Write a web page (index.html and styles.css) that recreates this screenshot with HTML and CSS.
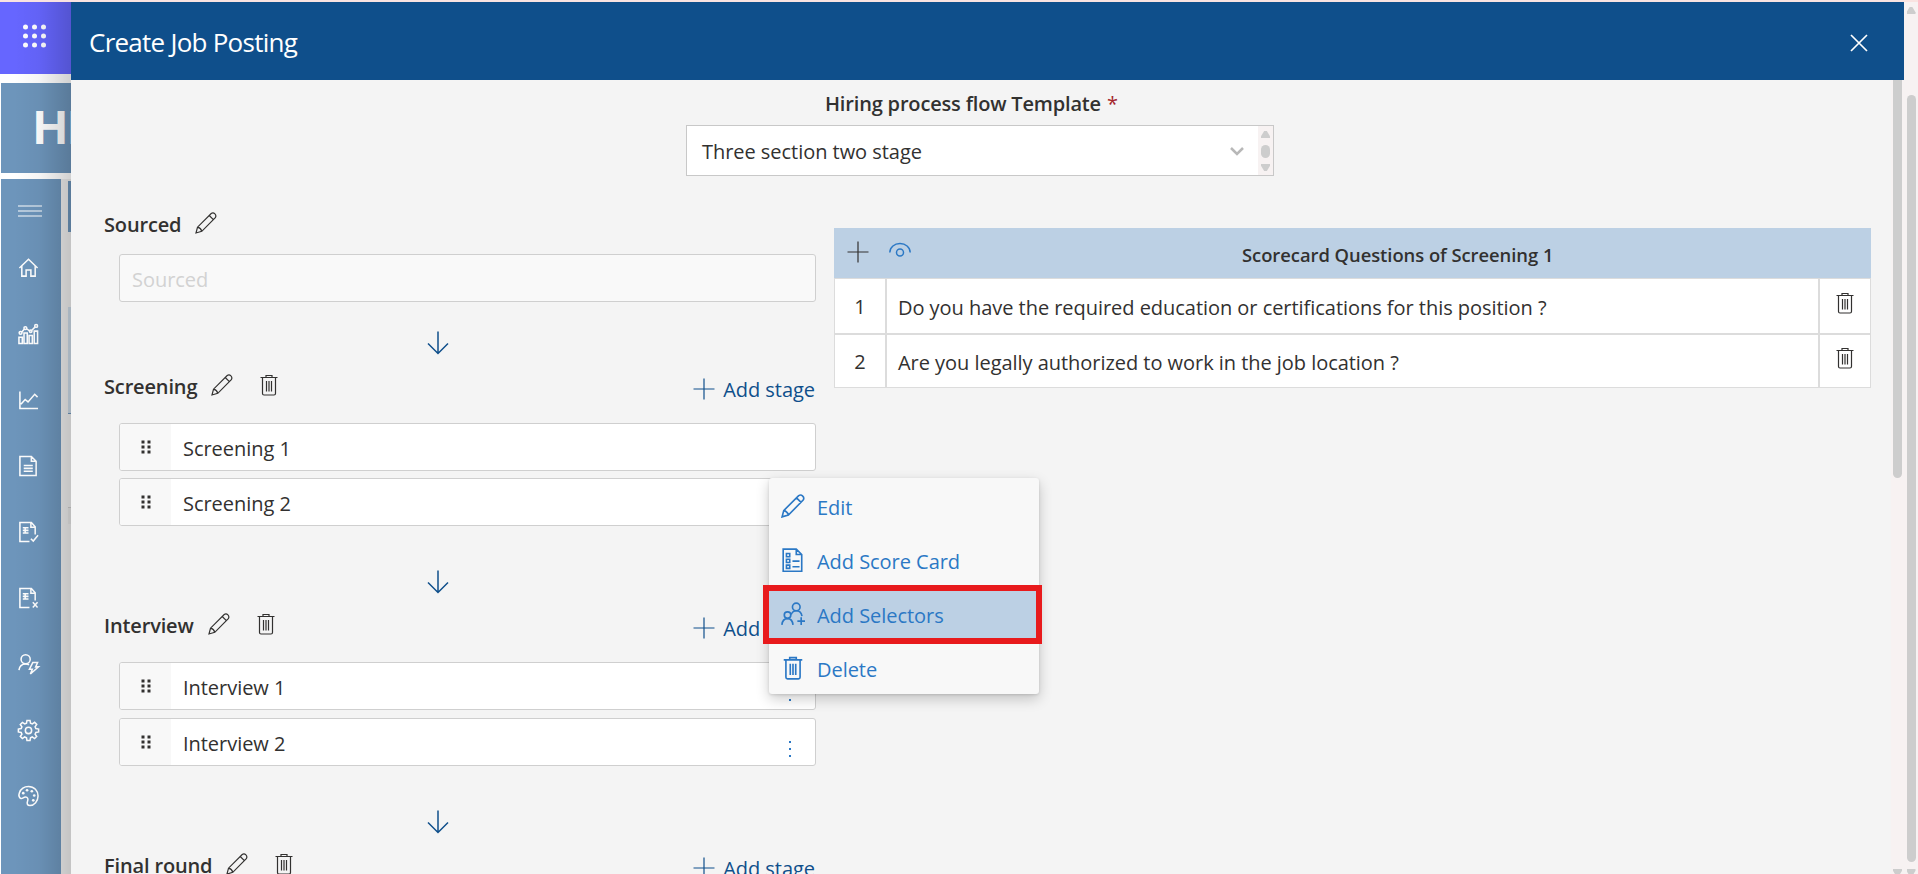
FILE: index.html
```html
<!DOCTYPE html>
<html lang="en">
<head>
<meta charset="utf-8">
<title>Create Job Posting</title>
<link rel="stylesheet" href="styles.css">
</head>
<body>
<svg class="defs" aria-hidden="true">
  <symbol id="pencil" viewBox="0 0 22 22"><path d="M1 21l1.500-5.800L16.200 1.500q2-1.300 3.700.400t.4 3.700L6.800 19.300zM2.500 15.200q3.300.600 4.300 4.100M14.200 3.500l4.200 4.200"/></symbol>
  <symbol id="trash" viewBox="0 0 22 22"><path d="M2.500 3.500h17M8 3.500V1.500h6v2M4.500 3.500V19.500q0 1.500 1.500 1.500h10q1.500 0 1.500-1.500V3.500M8.500 7v10.500M11 7v10.500M13.500 7v10.500"/></symbol>
  <symbol id="plus" viewBox="0 0 22 22"><path d="M.5 11h21M11 .5v21"/></symbol>
  <symbol id="down" viewBox="0 0 22 24"><path d="M11 .5v22M1 12.500l10 10 10-10"/></symbol>
  <symbol id="grip" viewBox="0 0 10 14"><path class="solid" d="M.5.500h3v3h-3zM6.500.500h3v3h-3zM.5 5.500h3v3h-3zM6.500 5.500h3v3h-3zM.5 10.500h3v3h-3zM6.500 10.500h3v3h-3z"/></symbol>
  <symbol id="more" viewBox="0 0 4 18"><path class="solid" d="M1 1h2v2H1zM1 8h2v2H1zM1 15h2v2H1z"/></symbol>
</svg>

<div class="app">
  <div class="suite">
    <svg class="waffle" viewBox="0 0 24 24"><circle cx="3" cy="3" r="2.500"/><circle cx="12" cy="3" r="2.500"/><circle cx="21" cy="3" r="2.500"/><circle cx="3" cy="12" r="2.500"/><circle cx="12" cy="12" r="2.500"/><circle cx="21" cy="12" r="2.500"/><circle cx="3" cy="21" r="2.500"/><circle cx="12" cy="21" r="2.500"/><circle cx="21" cy="21" r="2.500"/></svg>
  </div>
  <div class="brand">HR</div>
  <div class="below">
    <nav class="rail">
      <svg class="burger" viewBox="0 0 24 12"><path d="M0 1h24M0 6h24M0 11h24"/></svg>
      <svg viewBox="0 0 22 22"><path d="M1.500 11L11 1.800 20.500 11M4 9v10.500h4.500v-6.500h5v6.500H18V9"/></svg>
      <svg viewBox="0 0 22 22"><path d="M1 14.500h3.500V21H1zM6.300 10h3.400v11H6.300zM11.600 12.500H15V21h-3.400zM17 8h3.500v13H17zM4 9l2.500-3M9 5.500l3.500 2.500M14.500 7l3.500-3.500"/><circle cx="2.700" cy="9.800" r="1.500"/><circle cx="7.700" cy="4.800" r="1.500"/><circle cx="13.300" cy="8" r="1.300"/><circle cx="19" cy="2.500" r="1.500"/></svg>
      <svg viewBox="0 0 22 22"><path d="M2 2v18h19M3 15.500l4.500-5 3 2.500 7-8 3 3"/></svg>
      <svg viewBox="0 0 22 22"><path d="M2 1h12l5 5v15H2zM14 1v5h5M6 10.500h9.500M6 13.500h9.500M6 16.500h9.500"/></svg>
      <svg viewBox="0 0 22 22"><path d="M12 21H2V1h12l4 4.500v8M13.500 1v5H18M5 6.500h6M5 9.300h6M5 12h6M7.500 6v6.500M13.500 18l2.500 2.500 5-6"/></svg>
      <svg viewBox="0 0 22 22"><path d="M12 21H2V1h12l4 4.500v8M13.500 1v5H18M5 6.500h6M5 9.300h6M5 12h6M7.500 6v6.500M15.500 15.500l5 5.500M20.500 15.500l-5 5.500"/></svg>
      <svg viewBox="0 0 22 22"><circle cx="8" cy="6" r="4.800"/><path d="M1 17.500c.5-4 3-6.500 7-6.500 1.500 0 2.500.3 3.500 1M15.500 9.500h5l-2 4.500h3l-8.500 7.500 2-5h-3z"/></svg>
      <svg viewBox="0 0 22 22"><path d="M9.400 1h3.200l.5 2.900 1.900.8 2.400-1.700 2.200 2.200-1.700 2.500.8 1.800 2.900.5v3l-2.900.5-.8 1.900 1.700 2.400-2.200 2.200-2.500-1.700-1.800.8-.5 2.900h-3.200l-.5-2.900-1.900-.8-2.400 1.700-2.200-2.200 1.700-2.400-.8-1.900-2.900-.5v-3l2.900-.5.800-1.900-1.700-2.400 2.200-2.200 2.500 1.700 1.800-.8z"/><circle cx="11" cy="11.500" r="3.300"/></svg>
      <svg viewBox="0 0 22 22"><path d="M11 1c6 0 10 4.500 10 10s-4 10-8.500 10c-3 0-3.300-2.500-2.500-4.500 1-2.500 0-4.500-2-4.500-2.500 0-3 2-5 1.500C1 13 .5 10 1.500 7.500 3 3.500 7 1 11 1z"/><g class="dots"><circle cx="5.500" cy="8" r="1.400"/><circle cx="9.500" cy="5" r="1.400"/><circle cx="14.500" cy="6" r="1.400"/><circle cx="17" cy="10.500" r="1.400"/><circle cx="16" cy="15.500" r="1.400"/></g></svg>
    </nav>
    <div class="sliver"><i class="s1"></i><i class="s2"></i><i class="s3"></i></div>
  </div>
</div>

<section class="panel">
  <header class="bar"><h1>Create Job Posting</h1><svg class="close" viewBox="0 0 18 18"><path d="M1 1l16 16M17 1L1 17"/></svg></header>
  <div class="scroller">
    <main class="content">
      <div class="template">
        <label class="t-label"><span>Hiring process flow Template</span> <b>*</b></label>
        <div class="select"><span class="t-value">Three section two stage</span><svg class="chev" viewBox="0 0 16 12"><path d="M2 3l6 6 6-6"/></svg>
          <div class="mini"><i class="up"></i><i class="thumb"></i><i class="dn"></i></div></div>
      </div>
      <div class="cols">
        <div class="flow">
          <div class="head first"><h2>Sourced</h2><svg class="ic"><use href="#pencil"/></svg></div>
          <div class="box disabled">Sourced</div>
          <svg class="arrow"><use href="#down"/></svg>

          <div class="head"><h2>Screening</h2><svg class="ic"><use href="#pencil"/></svg><svg class="ic del"><use href="#trash"/></svg><a class="add"><svg class="ic"><use href="#plus"/></svg><span>Add stage</span></a></div>
          <div class="stages">
            <div class="box"><span class="handle"><svg><use href="#grip"/></svg></span><span class="stage">Screening 1</span></div>
            <div class="box"><span class="handle"><svg><use href="#grip"/></svg></span><span class="stage">Screening 2</span></div>
          </div>
          <svg class="arrow"><use href="#down"/></svg>

          <div class="head"><h2>Interview</h2><svg class="ic"><use href="#pencil"/></svg><svg class="ic del"><use href="#trash"/></svg><a class="add"><svg class="ic"><use href="#plus"/></svg><span>Add stage</span></a></div>
          <div class="stages wide">
            <div class="box"><span class="handle"><svg><use href="#grip"/></svg></span><span class="stage">Interview 1</span><svg class="dots3"><use href="#more"/></svg></div>
            <div class="box"><span class="handle"><svg><use href="#grip"/></svg></span><span class="stage">Interview 2</span><svg class="dots3"><use href="#more"/></svg></div>
          </div>
          <svg class="arrow"><use href="#down"/></svg>

          <div class="head"><h2>Final round</h2><svg class="ic"><use href="#pencil"/></svg><svg class="ic del"><use href="#trash"/></svg><a class="add"><svg class="ic"><use href="#plus"/></svg><span>Add stage</span></a></div>
        </div>

        <div class="score">
          <div class="s-head"><svg class="ic"><use href="#plus"/></svg><svg class="ic eye" viewBox="0 0 22 22"><path d="M.8 11.500C1 6 5.500 2.600 11 2.600S21 6 21.200 11.500"/><circle cx="11" cy="11.500" r="3.500"/></svg><span>Scorecard Questions of Screening 1</span></div>
          <div class="s-row"><span class="num">1</span><span class="q">Do you have the required education or certifications for this position ?</span><span class="act"><svg class="ic"><use href="#trash"/></svg></span></div>
          <div class="s-row"><span class="num">2</span><span class="q">Are you legally authorized to work in the job location ?</span><span class="act"><svg class="ic"><use href="#trash"/></svg></span></div>
        </div>
      </div>
    </main>
    <div class="track inner"><i class="thumb"></i><i class="dn"></i></div>
  </div>
</section>
<div class="track outer"><i class="up"></i><i class="thumb"></i><i class="dn"></i></div>

<div class="menu">
  <a class="m-item"><svg class="mi"><use href="#pencil"/></svg><span>Edit</span></a>
  <a class="m-item"><svg class="mi" viewBox="0 0 22 22"><path d="M2 1h12l5 5v15.300H2zM14 1v5h5M5 5h3v3H5zM5 10.300h3v3H5zM5 15.700h3v3H5zM10.500 12h6.500M10.500 17.200h6.500"/></svg><span>Add Score Card</span></a>
  <a class="m-item on"><svg class="mi" viewBox="0 0 22 22"><circle cx="14" cy="4.500" r="3.500"/><circle cx="6" cy="12" r="3"/><path d="M.8 21c.3-3.500 2.200-5.800 5.200-5.800s4.700 2.300 5 5.800M9.300 11.500c1-2.300 2.700-3.500 4.700-3.500 3 0 4.800 2 5.200 5M18.500 14v7M15 17.500h7"/></svg><span>Add Selectors</span></a>
  <a class="m-item"><svg class="mi"><use href="#trash"/></svg><span>Delete</span></a>
</div>
<div class="marker"></div>
</body>
</html>
```

FILE: styles.css
```css
* { box-sizing: border-box; }
body { margin: 0; width: 1918px; height: 874px; overflow: hidden; position: relative; background: #fff; color: #323130; font: 20px/27px "Open Sans", "Noto Sans", sans-serif; letter-spacing: -.04px; border-top: 2px solid #f9e3e1; }
.defs { position: absolute; width: 0; height: 0; }
svg { fill: none; stroke: currentColor; stroke-width: 1.2; flex: none; overflow: visible; }
.solid { fill: currentColor; stroke: none; }
h1, h2 { margin: 0; font-weight: 400; }

/* page behind the panel */
.app { width: 71px; height: 872px; display: flex; flex-direction: column; overflow: hidden; position: relative; }
.app::after { content: ""; position: absolute; inset: 0; background: linear-gradient(90deg, rgba(0,0,0,0) 20%, rgba(0,0,0,.04) 55%, rgba(0,0,0,.18)); }
.suite { height: 72px; background: #6666ff; padding: 22px 0 0 22px; }
.waffle { width: 25px; height: 24px; fill: #fff; stroke: none; display: block; }
.brand { margin: 9px 0 6px 1px; height: 90px; background: #6d95bb; color: #fff; font: bold 48px/90px "Liberation Sans", sans-serif; padding-left: 32px; white-space: nowrap; }
.below { flex: 1; display: flex; margin-left: 1px; background: #eee; }
.rail { width: 60px; background: #6d95bb; color: #fff; display: flex; flex-direction: column; padding: 26px 0 0 17px; }
.rail svg { width: 21px; height: 22px; margin-bottom: 44px; stroke-width: 1.6; }
.rail .burger { width: 24px; height: 12px; margin-bottom: 40px; stroke-width: 1; }
.dots { fill: #fff; stroke: none; }
.sliver { width: 10px; padding: 2px 0 0 7px; display: flex; flex-direction: column; }
.sliver i { display: block; }
.s1 { height: 51px; background: #6d95bb; }
.s2 { height: 107px; margin-top: 75px; background: #cbdae7; border-bottom: 1px solid #6d95bb; }
.s3 { height: 17px; margin-top: 93px; background: #e6e6e6; border-top: 1px solid #ccc; }

/* panel */
.panel { position: absolute; left: 71px; top: 0; width: 1833px; height: 872px; display: flex; flex-direction: column; background: #f4f4f4; overflow: hidden; }
.bar { height: 78px; background: #0f4f8b; color: #fff; display: flex; align-items: center; justify-content: space-between; padding: 4px 36px 0 18px; flex: none; }
.bar h1 { font-size: 26px; line-height: 34px; letter-spacing: -.75px; margin-top: -2px; }
.close { width: 18px; height: 18px; stroke-width: 1.7; }
.scroller { flex: 1; display: flex; min-height: 0; }
.content { width: 1820px; padding: 9px 33px 0; flex: none; }
.template { width: 588px; margin-left: 582px; }
.t-label { display: flex; height: 36px; padding: 1px 0 0 139px; gap: 6px; white-space: nowrap; font-weight: 600; letter-spacing: -.17px; }
.t-label b { color: #a4262c; font-weight: 400; }
.select { height: 51px; border: 1px solid #c8c8c8; background: #fff; display: flex; align-items: center; padding-left: 15px; }
.t-value { padding-top: 2px; }
.chev { width: 16px; height: 12px; margin-left: auto; margin-right: 13px; color: #b8b8b8; stroke-width: 2.5; }
.mini { width: 15px; height: 49px; background: #f7f2f2; display: flex; flex-direction: column; align-items: center; justify-content: space-between; padding: 5px 0 4px; }
.mini .thumb { width: 9px; height: 13px; border-radius: 5px; background: #cdcdcd; }
.up, .dn { width: 9px; height: 7px; flex: none; background: #cdcdcd; clip-path: polygon(35% 0, 65% 0, 100% 75%, 100% 100%, 0 100%, 0 75%); }
.dn { transform: scaleY(-1); }
.cols { display: flex; align-items: flex-start; }
.flow { width: 712px; height: 698px; flex: none; }
.ic { width: 22px; height: 22px; }
.head { height: 38px; display: flex; align-items: center; width: 712px; white-space: nowrap; margin-bottom: 19px; }
.head.first { margin: 28px 0 12px; }
.head h2 { font-size: 20px; font-weight: 600; letter-spacing: -.15px; margin-right: 14px; padding-top: 2px; }
.del { margin-left: 25px; }
.add { margin-left: auto; display: flex; align-items: center; gap: 8px; color: #0f4f8b; padding: 8px 0 0; margin-right: 1px; }
.stages { display: flex; flex-direction: column; gap: 7px; }
.stages.wide { gap: 8px; }
.box { width: 697px; height: 48px; margin-left: 15px; border: 1px solid #cfcfcf; border-radius: 3px; background: #fff; display: flex; align-items: center; overflow: hidden; white-space: nowrap; }
.disabled { background: #f9f9f9; color: #d2d2d2; padding: 2px 0 0 12px; }
.handle { width: 51px; height: 46px; background: #f8f8f8; display: flex; align-items: center; justify-content: center; }
.handle svg { width: 10px; height: 14px; }
.stage { padding: 3px 0 0 12px; }
.dots3 { width: 4px; height: 18px; margin: 14px 23px 0 auto; color: #2b78c5; }
.arrow { display: block; width: 22px; height: 24px; margin: 29px 0 11px 323px; color: #0f4f8b; stroke-width: 1.5; }
.stages + .arrow { margin-top: 44px; }

/* scorecard table */
.score { width: 1037px; flex: none; margin: 52px 0 0 18px; border: 1px solid #dcdcdc; border-top: 0; background: #fff; }
.s-head { height: 50px; margin: 0 -1px; background: #bcd0e4; display: flex; align-items: center; padding: 0 0 2px 13px; font-weight: 600; font-size: 18.4px; }
.s-head span { padding-top: 5px; margin-left: 331px; white-space: nowrap; }
.eye { margin-left: 20px; color: #2b78c5; stroke-width: 1.5; }
.s-row { display: flex; height: 55px; border-top: 1px solid #dcdcdc; }
.s-row + .s-row { border-top-width: 2px; height: 54px; }
.s-row > span { display: flex; align-items: center; }
.num { width: 50px; justify-content: center; }
.q { flex: 1; border: solid #dcdcdc; border-width: 0 2px; padding: 2px 0 0 11px; white-space: nowrap; }
.act { width: 50px; justify-content: center; padding-bottom: 7px; }

/* scrollbars */
.track { background: #f7f2f2; display: flex; flex-direction: column; align-items: center; }
.track .thumb { width: 9px; flex: none; background: #cdcdcd; border-radius: 5px; }
.inner { width: 13px; height: 794px; }
.inner .thumb { height: 398px; border-radius: 0 0 5px 5px; }
.inner .dn { margin-top: 391px; }
.outer { position: absolute; right: 0; top: 0; width: 14px; height: 872px; padding-top: 5px; }
.outer .thumb { height: 767px; margin-top: 81px; }
.outer .dn { margin-top: 7px; }

/* context menu */
.menu { position: absolute; left: 769px; top: 476px; width: 270px; height: 216px; background: #f8f8f8; border-radius: 3px; box-shadow: 0 5px 14px rgba(0,0,0,.2), 0 1px 3px rgba(0,0,0,.12); color: #2b78c5; }
.m-item { height: 54px; display: flex; align-items: center; padding: 3px 0 0 12px; gap: 12px; white-space: nowrap; }
.m-item.on { background: #bcd0e4; }
.mi { width: 24px; height: 24px; stroke-width: 1.5; margin-top: -2px; }
.mi + span { padding-top: 1px; }
.marker { position: absolute; left: 763px; top: 583px; width: 279px; height: 59px; border: 6px solid #e81a1c; }
```
